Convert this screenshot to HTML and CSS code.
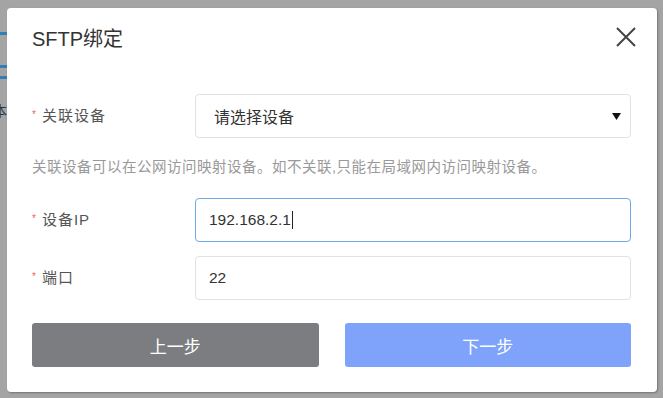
FILE: index.html
```html
<!DOCTYPE html>
<html lang="zh">
<head>
<meta charset="utf-8">
<title>SFTP绑定</title>
<link rel="stylesheet" href="styles.css">
</head>
<body>
<div class="page">
  <div class="page-bar page-bar-1"></div>
  <div class="page-bar page-bar-2"></div>
  <div class="page-bar page-bar-3"></div>
  <div class="page-char">本</div>
</div>
<div class="overlay">
  <div class="dialog">
    <div class="dialog-header">
      <h1 class="dialog-title">SFTP绑定</h1>
      <button class="close-btn" aria-label="关闭">
        <svg width="22" height="22" viewBox="0 0 22 22"><path d="M2 2 L20 20 M20 2 L2 20" stroke="#444" stroke-width="2" fill="none"/></svg>
      </button>
    </div>
    <div class="dialog-body">
      <div class="form-row">
        <label class="form-label"><span class="req">*</span>关联设备</label>
        <div class="select-box">
          <span>请选择设备</span>
          <svg class="caret" width="9" height="7" viewBox="0 0 9 7"><path d="M0 0 H9 L4.5 7 Z" fill="#111"/></svg>
        </div>
      </div>
      <p class="hint">关联设备可以在公网访问映射设备。如不关联,只能在局域网内访问映射设备。</p>
      <div class="form-row">
        <label class="form-label"><span class="req">*</span>设备IP</label>
        <div class="input-box focused">192.168.2.1<span class="cursor"></span></div>
      </div>
      <div class="form-row row-port">
        <label class="form-label"><span class="req">*</span>端口</label>
        <div class="input-box">22</div>
      </div>
      <div class="actions">
        <button class="btn btn-prev">上一步</button>
        <button class="btn btn-next">下一步</button>
      </div>
    </div>
  </div>
</div>
</body>
</html>
```
FILE: styles.css
```css
* { box-sizing: border-box; }
html, body { margin: 0; padding: 0; }
body {
  width: 663px;
  height: 398px;
  overflow: hidden;
  background: #a4a4a4;
  font-family: "Liberation Sans", "Noto Sans CJK SC", sans-serif;
  position: relative;
}
.page { position: absolute; inset: 0; }
.page-bar { position: absolute; left: 0; width: 8px; height: 3px; background: #2e7fb3; }
.page-bar-1 { top: 32px; }
.page-bar-2 { top: 65px; }
.page-bar-3 { top: 76px; }
.page-char { position: absolute; left: -7px; top: 100px; font-size: 14px; color: #333; }

.overlay {
  position: absolute;
  inset: 0;
  padding: 8px 6px 6px 7px;
}
.dialog {
  width: 650px;
  height: 384px;
  background: #fff;
  border-radius: 4px;
  padding: 0 26px 0 25px;
  box-shadow: 1px 1px 2px rgba(0,0,0,0.3);
}
.dialog-header {
  height: 58px;
  display: flex;
  align-items: center;
  justify-content: space-between;
}
.dialog-title {
  margin: 0;
  font-size: 20px;
  font-weight: normal;
  color: #333;
}
.close-btn {
  border: 0;
  background: none;
  padding: 0;
  margin-right: -6px;
  width: 22px;
  height: 22px;
  display: flex;
}
.dialog-body { padding-top: 28px; }
.form-row {
  display: flex;
  align-items: center;
  height: 44px;
}
.form-label {
  width: 163px;
  flex: none;
  font-size: 15px;
  letter-spacing: 1px;
  color: #555;
  display: flex;
  align-items: center;
  margin-top: -4px;
}
.req { color: #e66; font-size: 10px; margin-right: 6px; letter-spacing: 0; }
.select-box, .input-box {
  flex: 1;
  height: 44px;
  border: 1px solid #e2e2e2;
  border-radius: 4px;
  display: flex;
  align-items: center;
  color: #333;
}
.select-box {
  font-size: 16px;
  padding: 0 9px 0 18px;
  justify-content: space-between;
}
.input-box { padding: 0 13px; font-size: 15.5px; }
.input-box.focused { border-color: #6fa8e6; }
.cursor { display: inline-block; width: 1px; height: 18px; background: #222; margin-left: 1px; }
.hint {
  margin: 19px 0 21px;
  font-size: 14.5px;
  letter-spacing: 0.5px;
  line-height: 20px;
  color: #999;
}
.row-port { margin-top: 14px; }
.actions {
  display: flex;
  gap: 26px;
  margin-top: 23px;
}
.btn {
  flex: 1;
  height: 44px;
  border: 0;
  border-radius: 3px;
  color: #fff;
  font-size: 17px;
  font-family: inherit;
}
.btn-prev { background: #7b7d81; }
.btn-next { background: #7fa3fb; }
```
